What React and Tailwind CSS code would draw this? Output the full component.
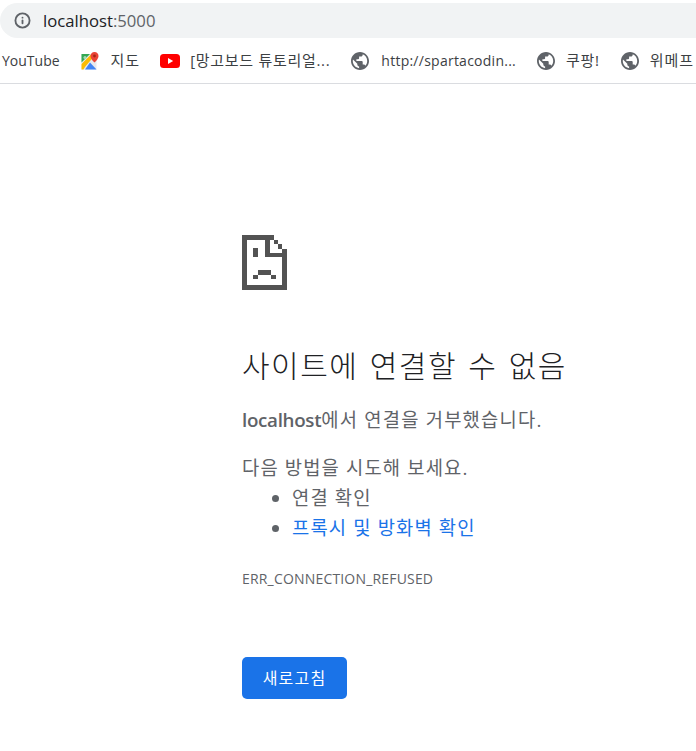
import { Info } from 'lucide-react'

const FONT = 'font-["Open_Sans","Noto_Sans_CJK_KR",sans-serif]'

function Globe() {
  return (
    <svg viewBox="2 2 20 20" className="w-[18px] h-[18px] shrink-0" fill="#5f6368">
      <path d="M12 2C6.48 2 2 6.48 2 12s4.48 10 10 10 10-4.48 10-10S17.52 2 12 2zm-1 17.93c-3.95-.49-7-3.85-7-7.93 0-.62.08-1.21.21-1.79L9 15v1c0 1.1.9 2 2 2v1.93zm6.9-2.54c-.26-.81-1-1.39-1.9-1.39h-1v-3c0-.55-.45-1-1-1H8v-2h2c.55 0 1-.45 1-1V7h2c1.1 0 2-.9 2-2v-.41c2.93 1.19 5 4.06 5 7.41 0 2.08-.8 3.97-2.1 5.39z" />
    </svg>
  )
}

function MapsIcon() {
  return (
    <svg viewBox="0 0 18 18" className="w-[18px] h-[18px] shrink-0">
      <rect x="0.5" y="2" width="15" height="15.5" fill="#e8eaed" />
      <path d="M0.5 2 L9 2 L0.5 10.5 Z" fill="#34a853" />
      <circle cx="4" cy="5.5" r="1.6" fill="#a8dab5" />
      <path d="M0.5 12 L10 2.5 L12 5.5 L4 15 L2.5 17.5 L0.5 17.5 Z" fill="#fbbc04" />
      <path d="M4 17.5 L9 10.5 L15.5 17.5 Z" fill="#4285f4" />
      <path d="M13.5 0 C11 0 9.5 2 9.5 4 C9.5 7 13.5 10.5 13.5 10.5 C13.5 10.5 17.5 7 17.5 4 C17.5 2 16 0 13.5 0 Z" fill="#ea4335" />
      <circle cx="13.5" cy="4" r="1.4" fill="#a52714" />
    </svg>
  )
}

function YoutubeIcon() {
  return (
    <svg viewBox="0 0 20 14" className="w-5 h-[14px] shrink-0">
      <rect width="20" height="14" rx="3.5" fill="#ff0000" />
      <path d="M8 4 L13.2 7 L8 10 Z" fill="#fff" />
    </svg>
  )
}

function SadTab() {
  return (
    <svg viewBox="0 0 45 55" className="w-[45px] h-[55px]" fill="#535353">
      <rect x="0" y="0" width="5" height="55" />
      <rect x="0" y="0" width="32" height="5" />
      <rect x="0" y="50" width="45" height="5" />
      <rect x="40" y="14" width="5" height="41" />
      <rect x="23" y="5" width="5" height="15" />
      <rect x="23" y="18" width="22" height="4" />
      <rect x="32" y="5" width="4" height="4" />
      <rect x="36" y="9" width="4" height="5" />
      <rect x="11" y="13" width="5" height="9" />
      <rect x="16" y="35" width="13" height="5" />
      <rect x="11" y="40" width="5" height="4" />
      <rect x="29" y="40" width="5" height="4" />
    </svg>
  )
}

export default function App() {
  return (
    <div className={`w-[696px] h-[751px] overflow-hidden bg-white ${FONT}`}>
      {/* Address bar */}
      <div className="pt-[3px]">
        <div className="h-[35px] w-[720px] rounded-l-full bg-[#f1f3f4] flex items-center pl-[14px]">
          <Info className="w-[17px] h-[17px] text-[#5f6368]" strokeWidth={2.6} />
          <span className="ml-[12px] text-[16.7px] text-[#202124]">
            localhost<span className="text-[#5f6368]">:5000</span>
          </span>
        </div>
      </div>

      {/* Bookmarks */}
      <div className="h-[46px] border-b border-[#dadce0] flex items-center pl-[2px] text-[14px] text-[#3c4043] whitespace-nowrap overflow-hidden">
        <span>YouTube</span>
        <div className="ml-[21px] flex items-center gap-[12px]">
          <MapsIcon />
          <span className="text-[15px] tracking-[1px]">지도</span>
        </div>
        <div className="ml-[20px] flex items-center gap-[10px]">
          <YoutubeIcon />
          <span className="text-[15px] tracking-[0.7px]">[망고보드 튜토리얼...</span>
        </div>
        <div className="ml-[21px] flex items-center gap-[12px]">
          <Globe />
          <span className="tracking-[0.25px]">http://spartacodin...</span>
        </div>
        <div className="ml-[21px] flex items-center gap-[11px]">
          <Globe />
          <span className="text-[15px] tracking-[0.7px]">쿠팡!</span>
        </div>
        <div className="ml-[21px] flex items-center gap-[11px]">
          <Globe />
          <span className="text-[15px] tracking-[1px]">위메프</span>
        </div>
      </div>

      {/* Error page */}
      <div className="pl-[242px] pt-[151px]">
        <SadTab />
        <h1 className="mt-[56px] text-[30px] leading-[40px] font-light tracking-[1.5px] [word-spacing:2px] text-[#202124] whitespace-nowrap">
          사이트에 연결할 수 없음
        </h1>
        <p className="mt-[19px] text-[18.75px] leading-[30px] text-[#5f6368] whitespace-nowrap">
          <b className="font-semibold tracking-[-0.3px]">localhost</b>
          <span className="tracking-[1.2px]">에서 연결을 거부했습니다.</span>
        </p>
        <p className="mt-[18px] text-[18.75px] leading-[30px] tracking-[1.15px] text-[#5f6368] whitespace-nowrap">
          다음 방법을 시도해 보세요.
        </p>
        <ul className="pl-[50px] text-[18.75px] leading-[30px] tracking-[1.15px] text-[#5f6368] list-disc whitespace-nowrap">
          <li>연결 확인</li>
          <li>
            <span className="text-[#1a73e8]">프록시 및 방화벽 확인</span>
          </li>
        </ul>
        <div className="mt-[26px] text-[14px] leading-[20px] tracking-[0.18px] text-[#5f6368]">ERR_CONNECTION_REFUSED</div>
        <button className="mt-[68px] w-[105px] h-[42px] rounded-[5px] bg-[#1a73e8] text-white text-[16px] tracking-[1.2px]">
          새로고침
        </button>
      </div>
    </div>
  )
}
